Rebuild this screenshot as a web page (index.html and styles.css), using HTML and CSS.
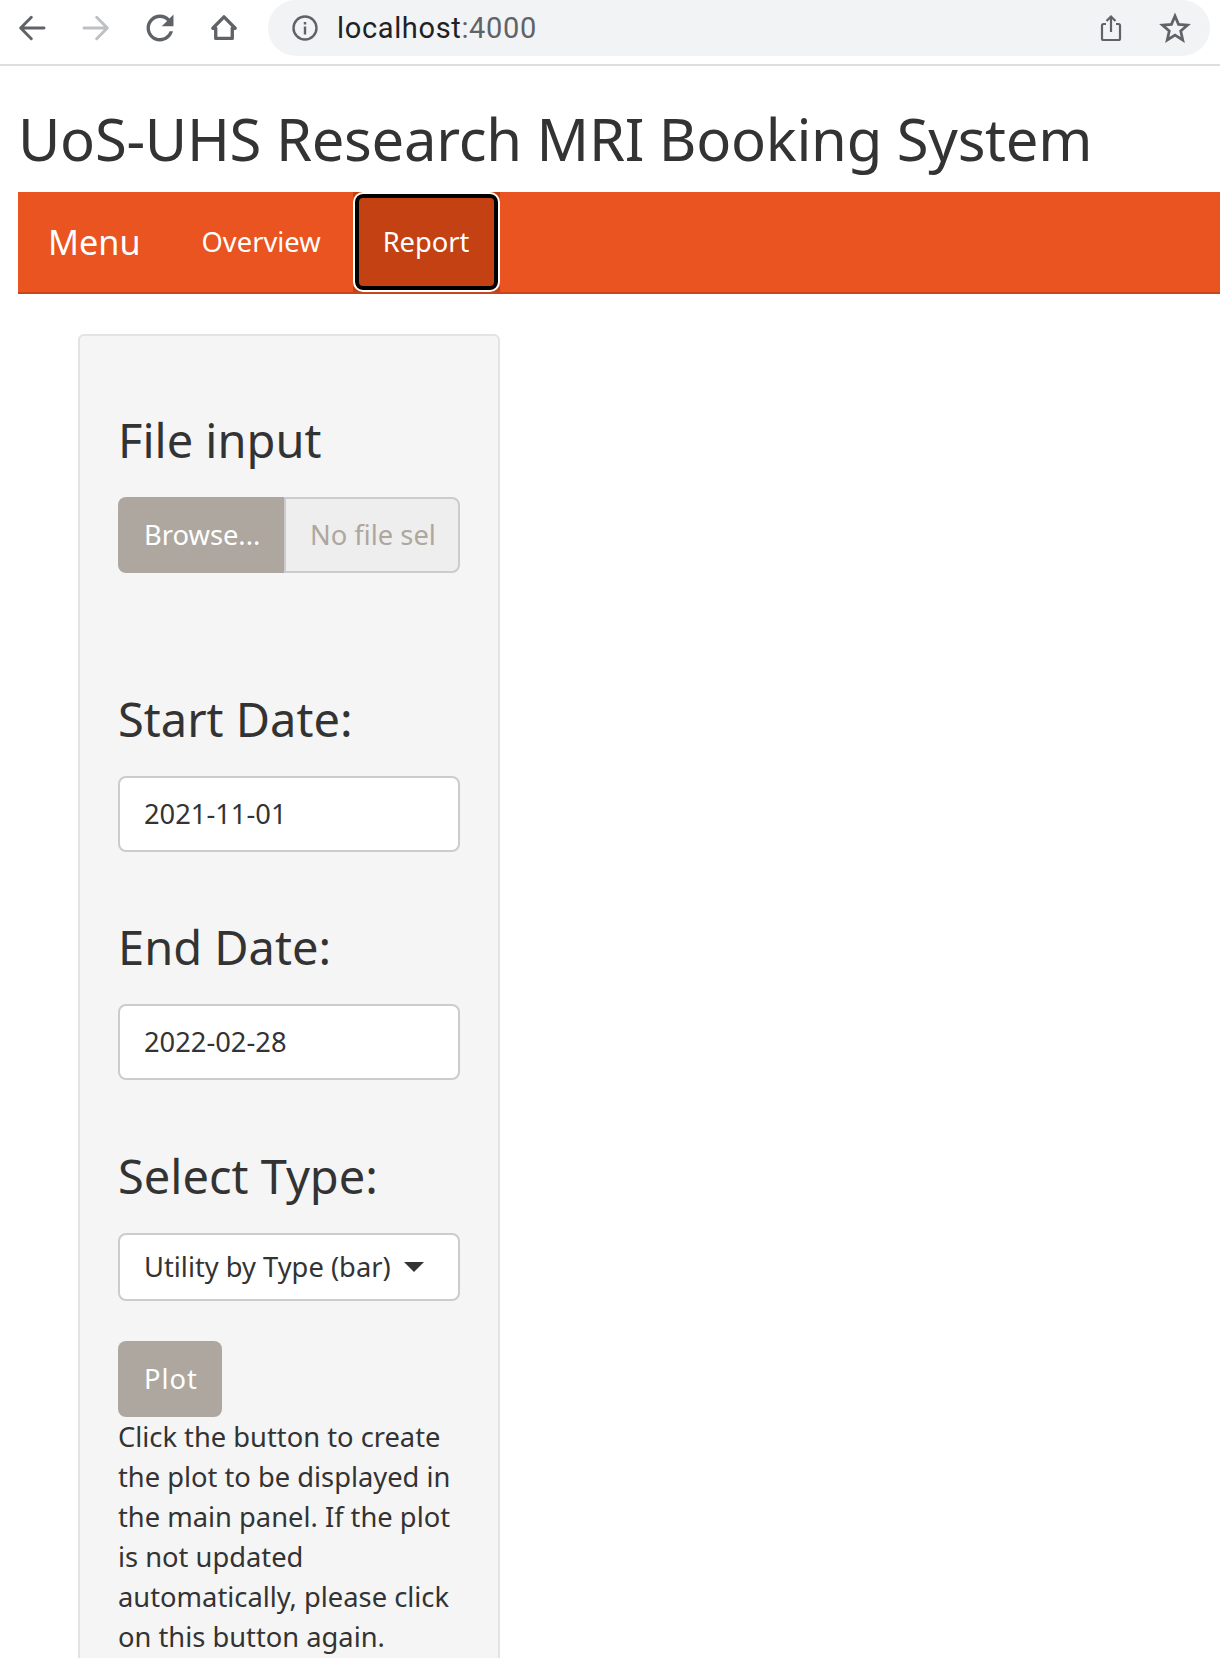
FILE: index.html
```html
<!DOCTYPE html>
<html lang="en">
<head>
    <meta charset="UTF-8">
    <meta name="viewport" content="width=device-width, initial-scale=1.0">
    <title>UoS-UHS Research MRI Booking System</title>
    <link rel="stylesheet" href="styles.css">
</head>
<body>

<div class="toolbar">
    <svg class="tool-icon" viewBox="0 0 24 24"><path d="M21 12H3.500M11.500 4L3.500 12l8 8"/></svg>
    <svg class="tool-icon tool-off" viewBox="0 0 24 24"><path d="M3 12h17.500M12.500 4l8 8-8 8"/></svg>
    <svg class="tool-icon tool-solid" viewBox="2.500 2.500 19 19"><path d="M17.650 6.350C16.200 4.900 14.210 4 12 4c-4.420 0-7.990 3.580-7.990 8s3.570 8 7.990 8c3.730 0 6.840-2.550 7.730-6h-2.080c-.82 2.330-3.040 4-5.650 4-3.310 0-6-2.690-6-6s2.690-6 6-6c1.660 0 3.140.69 4.220 1.780L13 11h7V4l-2.350 2.350z"/></svg>
    <svg class="tool-icon tool-home" viewBox="0 0 24 24"><path d="M12 3.600L3.600 12.200H5.800V19.800H18.200V12.200H20.400z"/></svg>

    <div class="address">
        <svg class="info-icon" viewBox="0 0 28 28"><circle cx="14" cy="14" r="11.500"/><rect x="12.800" y="12.500" width="2.400" height="8"/><rect x="12.800" y="8" width="2.400" height="2.500"/></svg>
        <span class="url">localhost<span class="url-port">:4000</span></span>
        <svg class="share-icon" viewBox="0 0 28 28"><path d="M9 10H6.500a1.500 1.500 0 0 0-1.500 1.500v13A1.500 1.500 0 0 0 6.500 26h15a1.500 1.500 0 0 0 1.500-1.500v-13a1.500 1.500 0 0 0-1.500-1.500H19M14 18V2.500M9.500 7L14 2.500 18.500 7"/></svg>
        <svg class="star-icon" viewBox="0 0 28 28"><path d="M14 3.500l3.100 7.300 7.900.7-6 5.200 1.800 7.800L14 20.300l-6.800 4.200 1.800-7.800-6-5.200 7.900-.7z"/></svg>
    </div>
</div>

<div class="page">
    <h1 class="page-title">UoS-UHS Research MRI Booking System</h1>

    <nav class="navbar">
        <a class="brand">Menu</a>
        <a class="nav-link">Overview</a>
        <div class="nav-item-active">
            <a class="nav-link nav-active">Report</a>
        </div>
    </nav>

    <div class="well">
        <div class="field field-file">
            <label class="field-label">File input</label>
            <div class="file-group">
                <span class="btn btn-browse">Browse...</span>
                <span class="file-name">No file sel</span>
            </div>
        </div>

        <div class="field field-start">
            <label class="field-label">Start Date:</label>
            <div class="text-box">2021-11-01</div>
        </div>

        <div class="field">
            <label class="field-label">End Date:</label>
            <div class="text-box">2022-02-28</div>
        </div>

        <div class="field field-select">
            <label class="field-label">Select Type:</label>
            <div class="select-box">Utility by Type (bar)<span class="caret"></span></div>
        </div>

        <span class="btn btn-plot">Plot</span>
        <p class="help">Click the button to create the plot to be displayed in the main panel. If the plot is not updated automatically, please click on this button again.</p>
    </div>
</div>

</body>
</html>
```

FILE: styles.css
```css
html, body {
    margin: 0;
    height: 100%;
    overflow: hidden;
    background: white;
}

body {
    font-family: "Noto Sans", sans-serif;
    font-size: 27.3px;
    line-height: 40px;
    color: #333;
}

.toolbar {
    display: flex;
    align-items: flex-start;
    height: 64px;
    padding-left: 1px;
    border-bottom: 2px solid #dedede;
}

.tool-icon {
    flex: none;
    width: 32px;
    height: 32px;
    margin: 12px 15px 0 15px;
    fill: none;
    stroke: #5f6368;
    stroke-width: 2.200;
    stroke-linecap: round;
    stroke-linejoin: round;
}

.tool-icon + .tool-icon {
    margin-left: 17px;
}

.tool-off {
    stroke: #bdc0c4;
}

.tool-solid {
    fill: #5f6368;
    stroke: none;
}

.tool-home {
    stroke-width: 2.500;
}

.address {
    display: flex;
    align-items: center;
    width: 942px;
    height: 56px;
    margin-left: 13px;
    border-radius: 28px;
    background: #f1f3f4;
}

.info-icon {
    width: 28px;
    height: 28px;
    margin-left: 23px;
    fill: #5f6368;
}

.info-icon circle {
    fill: none;
    stroke: #5f6368;
    stroke-width: 2.400;
}

.url {
    margin-left: 18px;
    font-family: Roboto, sans-serif;
    font-size: 29px;
    letter-spacing: 0.65px;
    color: #202124;
}

.url-port {
    color: #5f6368;
}

.share-icon {
    width: 28px;
    height: 32px;
    margin-left: auto;
    fill: none;
    stroke: #5f6368;
    stroke-width: 2.200;
}

.star-icon {
    width: 32px;
    height: 32px;
    margin: 0 19px 0 34px;
    fill: none;
    stroke: #5f6368;
    stroke-width: 2.400;
}

.page {
    padding-left: 18px;
}

.page-title {
    box-sizing: border-box;
    height: 126px;
    margin: 0;
    padding-top: 38px;
    font-size: 58px;
    font-weight: 400;
    line-height: 70px;
    letter-spacing: -0.3px;
    white-space: nowrap;
    color: #333;
}

.navbar {
    display: flex;
    align-items: center;
    height: 100px;
    border-bottom: 2px solid #c9461a;
    background: #e95420;
    color: white;
}

.brand {
    margin: 0 31px 0 30px;
    font-size: 34.200px;
}

.nav-link {
    padding: 0 30px;
}

.nav-item-active {
    align-self: stretch;
    margin-left: 2px;
    padding: 2px;
    background: #c34113;
}

.nav-active {
    display: flex;
    align-items: center;
    box-sizing: border-box;
    width: 143px;
    height: 96px;
    padding: 0 24px;
    border: 4px solid black;
    border-radius: 8px;
    outline: 2px solid white;
    background: #c34113;
}

.well {
    box-sizing: border-box;
    width: 422px;
    height: 1400px;
    margin: 40px 0 0 60px;
    padding: 76px 38px 0;
    border: 2px solid #e3e3e3;
    border-radius: 6px;
    background: #f5f5f5;
}

.field {
    margin-bottom: 68px;
}

.field-label {
    display: block;
    margin-bottom: 29px;
    font-size: 47px;
    line-height: 56px;
}

.file-group {
    display: flex;
    height: 76px;
}

.btn {
    display: flex;
    align-items: center;
    box-sizing: border-box;
    padding: 0 25px;
    background: #aea79f;
    color: white;
}

.btn-browse {
    flex: none;
    width: 166px;
    padding-left: 26px;
    border-radius: 8px 0 0 8px;
}

.file-name {
    flex: 1;
    display: flex;
    align-items: center;
    padding-left: 24px;
    border: 2px solid #ccc;
    border-radius: 0 8px 8px 0;
    background: #eee;
    color: #aea79f;
    white-space: nowrap;
}

.text-box, .select-box {
    display: flex;
    align-items: center;
    box-sizing: border-box;
    padding: 0 24px;
    border: 2px solid #ccc;
    border-radius: 8px;
    background: white;
}

.text-box {
    height: 76px;
}

.select-box {
    height: 68px;
}

.caret {
    width: 0;
    height: 0;
    margin-left: 13px;
    border-top: 10px solid #333;
    border-left: 10px solid transparent;
    border-right: 10px solid transparent;
}

.field-file {
    margin-bottom: 118px;
}

.field-start {
    margin-bottom: 67px;
}

.field-select {
    margin-bottom: 40px;
}

.btn-plot {
    width: 104px;
    height: 76px;
    padding-left: 26px;
    border-radius: 8px;
    letter-spacing: 1px;
}

.help {
    margin: 0;
}
```
